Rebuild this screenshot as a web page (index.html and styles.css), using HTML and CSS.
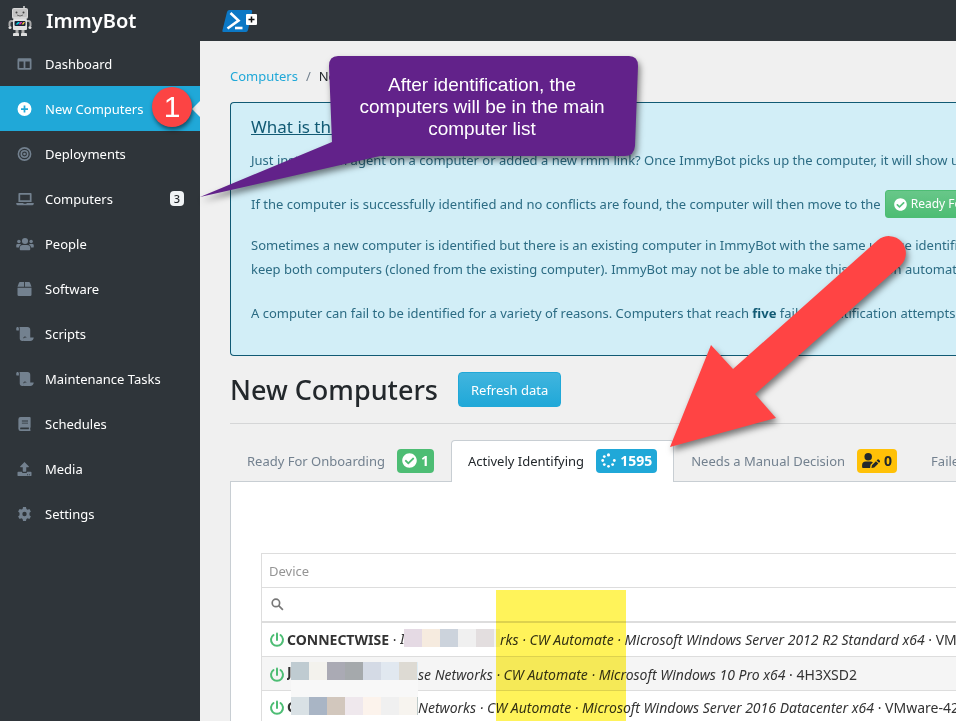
FILE: index.html
```html
<!DOCTYPE html>
<html lang="en">
<head>
<meta charset="utf-8">
<title>ImmyBot - New Computers</title>
<link rel="stylesheet" href="styles.css">
</head>
<body>
<svg class="defs" aria-hidden="true">
  <symbol id="check" viewBox="0 0 512 512"><path fill="currentColor" d="M504 256c0 137-111 248-248 248S8 393 8 256 119 8 256 8s248 111 248 248zM227 387l184-184c6-6 6-16 0-23l-22-22c-7-7-17-7-23 0L216 308l-70-70c-6-7-16-7-23 0l-22 22c-6 7-6 17 0 23l104 104c6 6 16 6 22 0z"/></symbol>
  <symbol id="scroll" viewBox="0 0 640 512"><path fill="currentColor" d="M48 0C22 0 0 22 0 48v64c0 9 7 16 16 16h80V48C96 22 75 0 48 0zm208 413c0-33 24-63 57-68 38-6 71 24 71 61v10h128V96c0-53-43-96-96-96H112c10 13 16 30 16 48v368c0 59 53 106 113 95 46-8 79-51 79-98zM288 416v0c0 38-11 70-29 96h253c71 0 128-57 128-128H352c-35 0-64 0-64 32z"/></symbol>
  <symbol id="power" viewBox="0 0 16 16"><g fill="none" stroke="currentColor" stroke-width="2" stroke-linecap="round"><path d="M4.500 3a6 6 0 1 0 7 0"/><path d="M8 1.500v6.500"/></g></symbol>
</svg>
<div class="app">
  <aside class="sidebar">
    <div class="brand">
      <svg class="robot" viewBox="0 0 24 32" aria-hidden="true">
        <path d="M16 4V1" stroke="#ddd" stroke-width="1.500"/>
        <rect x="4" y="3" width="16" height="11" rx="2" fill="#d7d7d7"/>
        <rect x="5" y="4" width="14" height="8" rx="1" fill="#c4c4c4"/>
        <circle cx="8.500" cy="7.500" r="1" fill="#444"/><circle cx="15.500" cy="7.500" r="1" fill="#444"/>
        <path d="M9 10q3 2 6 0" fill="none" stroke="#555" stroke-width=".8"/>
        <path d="M5 16H3.500Q1.500 16 1.500 18.500V21M19 16h1.500q2 0 2 2.500V21" fill="none" stroke="#aaa" stroke-width="2"/>
        <circle cx="2" cy="22.500" r="1.500" fill="#ddd"/><circle cx="22" cy="22.500" r="1.500" fill="#ddd"/>
        <rect x="5" y="14" width="14" height="11" rx="1" fill="#e2e2e2"/>
        <rect x="6.500" y="16" width="11" height="5" rx="1" fill="#182235"/>
        <path d="M7.500 19.500l2.500-2.500h2l-2 2.500z" fill="#00d5e8"/><path d="M10.500 19.500l2-2.500h2l-2 2.500z" fill="#ed38b1"/><path d="M13.500 19.500l2-2.500h1.500l-1.500 2.500z" fill="#f8c73a"/>
        <path d="M9 25v4M15 25v4" stroke="#aaa" stroke-width="3"/>
        <path d="M5 31v-2q0-1 1-1h4q1 0 1 1v2zM13 31v-2q0-1 1-1h4q1 0 1 1v2z" fill="#ddd"/>
      </svg>
      <span>ImmyBot</span>
    </div>
    <nav class="nav">
      <a href="#"><svg class="ico" viewBox="0 0 16 16"><path fill="currentColor" fill-rule="evenodd" d="M1.500 1.500h13q1.500 0 1.500 1.500v10q0 1.500-1.500 1.500h-13Q0 14.500 0 13V3q0-1.500 1.500-1.500zM2 5v7.500h5V5zm7 0v7.500h5V5z"/></svg>Dashboard</a>
      <a href="#" class="active"><svg class="ico" viewBox="0 0 16 16"><path fill="currentColor" fill-rule="evenodd" d="M8 0a8 8 0 1 0 0 16A8 8 0 0 0 8 0zM7 4h2v3h3v2H9v3H7V9H4V7h3z"/></svg>New Computers</a>
      <a href="#"><svg class="ico" viewBox="0 0 16 16"><g fill="none" stroke="currentColor" stroke-width="1.800"><circle cx="8" cy="8" r="7"/><circle cx="8" cy="8" r="3.700"/></g><circle cx="8" cy="8" r="1.500" fill="currentColor"/></svg>Deployments</a>
      <a href="#"><svg class="ico wide" viewBox="0 0 20 16"><path fill="currentColor" fill-rule="evenodd" d="M3.500 1h13q1 0 1 1v9.500h-15V2q0-1 1-1zm1 2v6.500h11V3zM0 12.500h8l.5 1h3l.5-1h8v1q0 1.500-1.500 1.500h-17Q0 15 0 13.500z"/></svg>Computers<span class="count">3</span></a>
      <a href="#"><svg class="ico wide" viewBox="0 0 20 16"><g fill="currentColor"><circle cx="10" cy="4.500" r="3.500"/><circle cx="3" cy="5" r="2"/><circle cx="17" cy="5" r="2"/><path d="M4 15v-2.500Q4 9 7.500 9h5q3.500 0 3.500 3.500V14q0 1-1 1H5q-1 0-1-1zM0 11V9.500Q0 8 1.500 8h3L5.500 8.500Q3.300 9.500 3 12H1q-1 0-1-1zM20 11V9.500Q20 8 18.500 8h-3l-1 .5q2.200 1 2.500 3.500h2q1 0 1-1z"/></g></svg>People</a>
      <a href="#"><svg class="ico" viewBox="0 0 16 16"><path fill="currentColor" d="M7.500 0v5.500H0l1.600-4.500Q2 0 3 0zM8.500 0v5.500H16l-1.600-4.500Q14 0 13 0zM0 6.500h16v8q0 1.500-1.500 1.500h-13Q0 16 0 14.500z"/></svg>Software</a>
      <a href="#"><svg class="ico wide"><use href="#scroll"/></svg>Scripts</a>
      <a href="#"><svg class="ico wide"><use href="#scroll"/></svg>Maintenance Tasks</a>
      <a href="#"><svg class="ico" viewBox="0 0 16 16"><path fill="currentColor" fill-rule="evenodd" d="M3.500 0H14q1 0 1 1v10.500q0 .6-.5 1v1.800q.5.300.5.800 0 .9-1 .9H3.500Q1 16 1 13.500v-11Q1 0 3.500 0zM5 4v1h7V4zm0 2.500v1h7v-1zM3.700 12Q3 12 3 13t.7 1H13v-2z"/></svg>Schedules</a>
      <a href="#"><svg class="ico" viewBox="0 0 16 16"><path fill="currentColor" fill-rule="evenodd" d="M8 0l5 5.200q.3.800-.6.800H10v4.500q0 .5-.5.500h-3q-.5 0-.5-.5V6H3.600q-.9 0-.6-.8zM1 11h4q0 1.500 1.500 1.500h3Q11 12.500 11 11h4q1 0 1 1v3q0 1-1 1H1q-1 0-1-1v-3q0-1 1-1zm10 3v1h1v-1zm2 0v1h1v-1z"/></svg>Media</a>
      <a href="#"><svg class="ico" viewBox="0 0 16 16"><path fill="currentColor" fill-rule="evenodd" d="M6.300 0h3.400l.5 2.200 1.300.8 2.100-.7 1.700 2.900-1.600 1.500v2.600l1.600 1.500-1.700 2.900-2.100-.7-1.300.8-.5 2.200H6.300l-.5-2.200-1.300-.8-2.100.7-1.700-2.900 1.600-1.500V6.700L.7 5.200l1.700-2.900 2.100.7 1.300-.8zM8 5.500a2.500 2.500 0 1 0 0 5 2.500 2.500 0 0 0 0-5z"/></svg>Settings</a>
    </nav>
  </aside>
  <div class="page">
    <header class="topbar">
      <svg class="shell" viewBox="0 0 36 24" role="img" aria-label="New script">
        <path d="M7.500 1H29q1.500 0 1.200 1.500L26 21q-.5 2-2 2H1.500Q0 23 .4 21.500L5 3q.5-2 2.500-2z" fill="#0c78c5"/>
        <path d="M8.500 4l8 7.500-11 8" fill="none" stroke="#fff" stroke-width="2.600"/><path d="M13 19h7.500" stroke="#fff" stroke-width="2.600"/>
        <rect x="24" y="5" width="11" height="11" rx="1" fill="#fff"/><path d="M29.500 7.500v6M26.500 10.500h6" stroke="#111" stroke-width="1.500"/>
      </svg>
    </header>
    <main class="main">
      <nav class="crumbs"><a href="#">Computers</a><span class="slash">/</span><span>New Computers</span></nav>
      <section class="info">
        <h2>What is this page for?</h2>
        <p>Just installed an agent on a computer or added a new rmm link? Once ImmyBot picks up the computer, it will show up here.</p>
        <p class="ready">If the computer is successfully identified and no conflicts are found, the computer will then move to the <button type="button" class="btn-ready"><svg class="tick"><use href="#check"/></svg>Ready For Onboarding</button></p>
        <p>Sometimes a new computer is identified but there is an existing computer in ImmyBot with the same unique identifier.<br>keep both computers (cloned from the existing computer). ImmyBot may not be able to make this decision automatically.</p>
        <p>A computer can fail to be identified for a variety of reasons. Computers that reach <b>five</b> failed identification attempts will be moved.</p>
      </section>
      <div class="title"><h1>New Computers</h1><button type="button" class="refresh">Refresh data</button></div>
      <hr>
      <nav class="tabs">
        <a href="#">Ready For Onboarding<span class="badge green"><svg><use href="#check"/></svg>1</span></a>
        <a href="#" class="current">Actively Identifying<span class="badge blue"><svg viewBox="0 0 16 16"><g fill="currentColor"><circle cx="8" cy="2" r="1.700"/><circle cx="3.500" cy="3.800" r="1.500"/><circle cx="1.800" cy="8" r="1.500"/><circle cx="3.500" cy="12.300" r="1.500"/><circle cx="8" cy="14.200" r="1.500"/><circle cx="12.400" cy="12.300" r="1.500"/><circle cx="14.200" cy="8" r="1.500"/></g></svg>1595</span></a>
        <a href="#">Needs a Manual Decision<span class="badge amber"><svg class="edit" viewBox="0 0 19 16"><g fill="currentColor"><circle cx="6.500" cy="4" r="4"/><path d="M0 15v-2q0-4 4-4h5q1.500 0 2.500 1L9 12.500 8.500 16H1q-1 0-1-1zM10 16l.5-3 4.300-4.300 2.500 2.500L13 15.500zM15.500 8l1-1q.6-.5 1.200 0L19 8.300q.5.600 0 1.200l-1 1z"/></g></svg>0</span></a>
        <a href="#">Failed</a>
      </nav>
      <section class="panel">
        <table class="grid">
          <thead>
            <tr><th>Device</th></tr>
            <tr class="search"><td><label><svg viewBox="0 0 14 14"><title>Search</title><g fill="none" stroke="#777" stroke-width="1.800"><circle cx="5.300" cy="5.300" r="4"/><path d="M8.300 8.300l4.500 4.500"/></g></svg><input type="text" aria-label="Search devices"></label></td></tr>
          </thead>
          <tbody>
            <tr><td><svg class="power"><use href="#power"/></svg><b>CONNECTWISE</b> · <i class="stub">I</i><span class="mosaic m1"><s></s><s></s><s></s><s></s><s></s><s></s></span><i>rks · CW Automate · Microsoft Windows Server 2012 R2 Standard x64</i> · VMware-42 2a</td></tr>
            <tr class="odd"><td><svg class="power"><use href="#power"/></svg><b class="stub">J</b><span class="mosaic m2"><s></s><s></s><s></s><s></s><s></s><s></s><s></s><s></s></span><i>se Networks · CW Automate · Microsoft Windows 10 Pro x64</i> · 4H3XSD2</td></tr>
            <tr><td><svg class="power"><use href="#power"/></svg><b class="stub">C</b><span class="mosaic m3"><s></s><s></s><s></s><s></s><s></s><s></s><s></s><s></s></span><i>Networks · CW Automate · Microsoft Windows Server 2016 Datacenter x64</i> · VMware-42 2a</td></tr>
          </tbody>
        </table>
      </section>
    </main>
  </div>
  <div class="notes">
    <div class="marker"></div>
    <svg class="shapes" aria-hidden="true">
      <path class="callout" d="M338 56H629Q638 56 638 66L635 146Q634 156 625 156H380L200 197 332 142 329 66Q329 56 338 56z"/>
      <path class="arrow" d="M670 447L711 345 733 369 877.700 240.300A17 17 0 0 1 900.300 265.700L755 394 776 418z"/>
    </svg>
    <p class="callout-text">After identification, the computers will be in the main computer list</p>
    <div class="step">1</div>
  </div>
</div>
</body>
</html>
```

FILE: styles.css
```css
* { box-sizing: border-box; }
body { margin: 0; font: 13px/20px "Noto Sans", "Open Sans", sans-serif; color: #23282c; background: #f0f0f0; }
a { color: inherit; text-decoration: none; }
button, input { font: inherit; }
.defs { display: none; }
.app { position: relative; display: flex; height: 100vh; overflow: hidden; }

.sidebar { flex: 0 0 200px; background: #2f353a; color: #fff; }
.brand { display: flex; align-items: center; height: 41px; padding-left: 8px; gap: 14px; font-size: 20px; font-weight: 600; }
.robot { width: 24px; height: 32px; }
.nav a { position: relative; display: flex; align-items: center; height: 45px; padding: 0 16px; gap: 12px; }
.ico { width: 17px; height: 14px; color: #73818f; }
.wide { width: 18px; margin-right: -1px; }
.nav .active { background: #20a8d8; }
.active .ico { color: #fff; }
.active::after { content: ""; position: absolute; right: 0; border: 8px solid transparent; border-left-width: 0; border-right-color: #f0f0f0; }
.count { margin-left: auto; width: 14px; border-radius: 4px; background: #f0f3f5; color: #23282c; font-size: 11px; line-height: 15px; font-weight: 500; text-align: center; }

.page { flex: 1; min-width: 0; }
.topbar { display: flex; align-items: center; height: 41px; padding-left: 22px; background: #2f353a; }
.shell { width: 36px; height: 24px; }
.main { padding: 25px 0 0 30px; white-space: nowrap; }
.crumbs { display: flex; gap: 8px; }
.crumbs a { color: #20a8d8; }
.slash { color: #73818f; }

.info { margin-top: 16px; padding: 12px 20px 10px; border: 1px solid #115a74; border-right: 0; border-radius: 4px 0 0 4px; background: #d2eef7; color: #2c6c84; line-height: 24px; }
.info h2 { margin: 0 0 9px; color: #115a74; font-size: 17px; line-height: 24px; font-weight: 400; text-decoration: underline; }
.info b { color: #115a74; }
.info p { margin: 0 0 20px; }
.info .ready { display: flex; align-items: center; gap: 4px; margin: -2px 0 15px; line-height: 28px; }
.btn-ready { display: inline-flex; align-items: center; height: 28px; padding: 0 8px; gap: 4px; border: 1px solid #4dbd74; border-radius: 3px; background: linear-gradient(#68c789, #4dbd74); color: #fff; font-size: 12px; }
.tick { width: 13px; height: 13px; }

.title { display: flex; align-items: center; gap: 20px; margin-top: 16px; }
h1 { margin: 0; font-size: 27px; line-height: 35px; font-weight: 500; }
.refresh { height: 35px; padding: 0 12px; border: 1px solid #20a8d8; border-radius: 4px; background: linear-gradient(#41b5de, #20a8d8); color: #fff; }
hr { margin: 16px 0; border: 0; border-top: 1px solid #d5d6d7; }

.tabs { position: relative; display: flex; }
.tabs a { display: flex; align-items: center; height: 42px; padding: 0 16px 2px; gap: 12px; border: 1px solid transparent; border-bottom: 0; color: #73818f; }
.tabs .current { border-color: #c8ced3; border-radius: 4px 4px 0 0; background: #fff; color: #23282c; }
.badge { display: flex; align-items: center; height: 24px; padding: 0 5px; gap: 4px; border-radius: 4px; color: #fff; font-size: 14px; font-weight: 700; }
.badge svg { width: 15px; height: 15px; }
.badge .edit { width: 18px; }
.green { background: #4dbd74; }
.blue { background: #20a8d8; }
.amber { background: #ffc107; color: #23282c; }

.panel { margin-top: -1px; padding: 71px 0 0 30px; border: 1px solid #c8ced3; border-right: 0; background: #fff; }
.grid { width: 100%; border-spacing: 0; border-left: 1px solid #ddd; border-top: 1px solid #ddd; color: #333; }
.grid th, .grid td { height: 34px; padding: 0 7px; border-bottom: 1px solid #ddd; text-align: left; font-weight: 400; }
.grid th { color: #959595; }
.grid tbody td { font-size: 14px; }
.grid .search td { height: 35px; border-bottom-width: 2px; }
.search label { display: flex; align-items: center; gap: 8px; padding-left: 2px; }
.search svg { width: 13px; height: 13px; }
.search input { flex: 1; height: 20px; padding: 0; border: 0; background: none; }
.odd td { background: #f5f5f5; }
.power { width: 16px; height: 16px; margin-right: 2px; color: #4dbd74; vertical-align: -3px; }
.stub { display: inline-block; width: 4px; overflow: hidden; vertical-align: top; }
.mosaic { display: inline-flex; height: 18px; vertical-align: -2px; overflow: hidden; }
.mosaic s { flex: 0 0 18px; background: #f0f0f0; }
.m1 { width: 96px; }
.m2, .m3 { width: 127px; }
.m2 { vertical-align: 0; box-shadow: 0 17px #f8f8f8; }
.m1 s:nth-child(1) { background: #e5dae4; }
.m1 s:nth-child(2) { background: #f6ebdf; }
.m1 s:nth-child(3) { background: #ccd3dc; }
.m1 s:nth-child(5) { background: #e3dedf; }
.m1 s:nth-child(6) { background: #f2f4ef; }
.m2 s:nth-child(1) { background: #bfcbd1; }
.m2 s:nth-child(2) { background: #f3f2ed; }
.m2 s:nth-child(3) { background: #aaaab4; }
.m2 s:nth-child(4) { background: #a5a9ac; }
.m2 s:nth-child(5) { background: #d4dae5; }
.m2 s:nth-child(6) { background: #e1e8f0; }
.m2 s:nth-child(7) { background: #dddad3; }
.m2 s:nth-child(8) { background: #dfedf5; }
.m3 s:nth-child(1) { background: #d9e1e5; }
.m3 s:nth-child(2) { background: #a9b5c5; }
.m3 s:nth-child(3) { background: #d2c7bd; }
.m3 s:nth-child(4) { background: #efe8ed; }
.m3 s:nth-child(5) { background: #fcf3ec; }
.m3 s:nth-child(7) { background: #f7f4ef; }
.m3 s:nth-child(8) { background: #bfcbca; }

.notes { position: absolute; inset: 0; pointer-events: none; }
.marker { position: absolute; left: 496px; top: 590px; bottom: 0; width: 130px; background: #fff35a; mix-blend-mode: multiply; }
.shapes { position: absolute; width: 100%; height: 100%; }
.callout { fill: #62228a; filter: drop-shadow(2px 4px 3px rgba(0, 0, 0, .5)); }
.arrow { fill: #ff4444; filter: drop-shadow(2px 4px 3px rgba(0, 0, 0, .5)); }
.callout-text { position: absolute; left: 350px; top: 74px; width: 264px; margin: 0; color: #fff; font: 19px/22px "Liberation Sans", Arial, sans-serif; text-align: center; }
.step { position: absolute; left: 152px; top: 87px; width: 40px; height: 40px; border-radius: 50%; background: #fc4444; box-shadow: 1px 3px 4px rgba(0, 0, 0, .5); color: #fff; font: 30px/40px "Liberation Sans", Arial, sans-serif; text-align: center; }
```
